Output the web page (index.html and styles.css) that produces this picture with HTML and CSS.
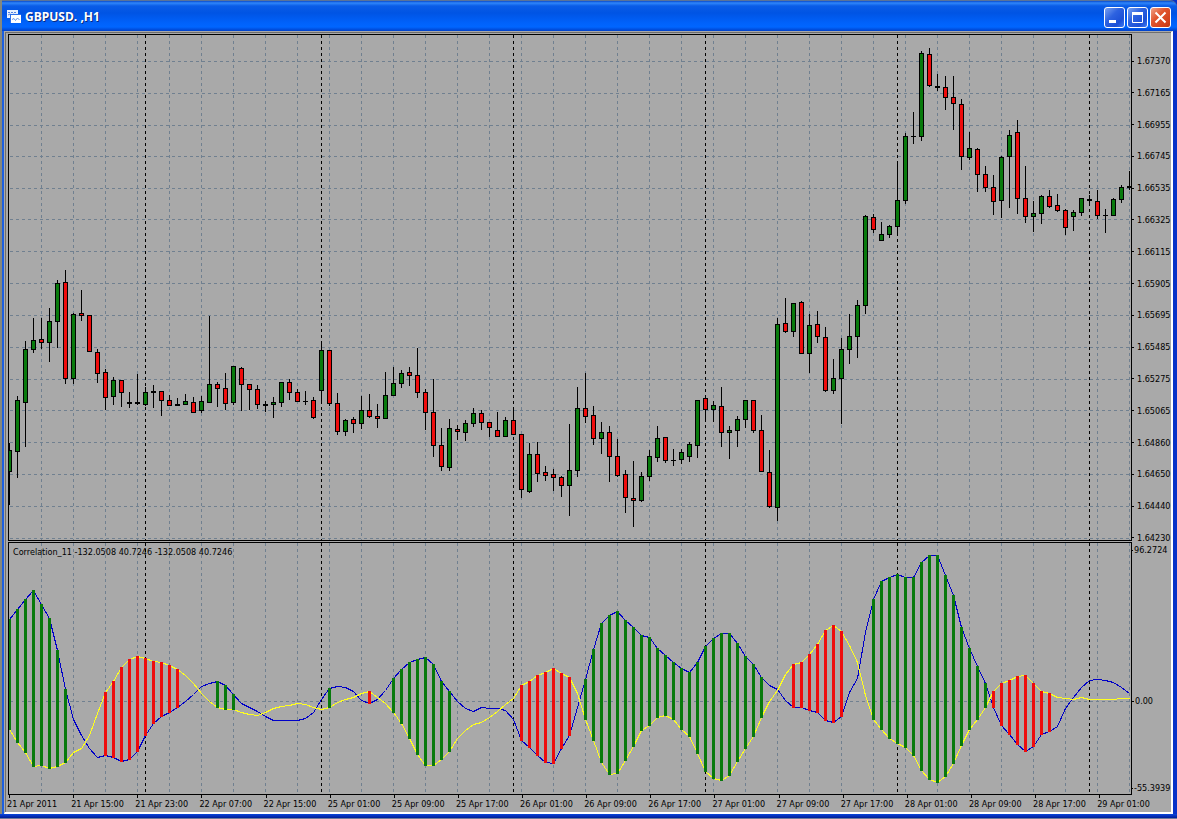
FILE: index.html
```html
<!DOCTYPE html>
<html lang="en">
<head>
<meta charset="utf-8">
<title>GBPUSD. ,H1</title>
<link rel="stylesheet" href="styles.css">
</head>
<body>
<main class="window">
  <header class="titlebar">
    <svg class="app-icon" viewBox="0 0 14 14" aria-hidden="true">
      <rect x="0" y="0" width="11" height="8" fill="#e8f0ff"/>
      <path d="M1 2.500h2M4 2.500h2M7 2.500h2M1 5l2-1 2 1 2-1" stroke="#4f82e4" fill="none"/>
      <rect x="3" y="4" width="11" height="9" fill="#2f6fe8"/>
      <rect x="4" y="5" width="10" height="8" fill="#fff"/>
      <path d="M5 9.500l2-1 1.500 2 2-2.500 2 2" stroke="#6a95e8" fill="none"/>
    </svg>
    <h1 class="title">GBPUSD. ,H1</h1>
    <div class="controls">
      <button class="control" type="button" aria-label="Minimize"><svg viewBox="0 0 19 19"><path d="M4 13.500h7" stroke="#fff" stroke-width="3"/></svg></button>
      <button class="control" type="button" aria-label="Maximize"><svg viewBox="0 0 19 19"><path d="M4.500 5v9.500h10V5" stroke="#fff" fill="none"/><path d="M4 5.500h11" stroke="#fff" stroke-width="3"/></svg></button>
      <button class="control close" type="button" aria-label="Close"><svg viewBox="0 0 19 19"><path d="M4.500 4.500l10 10M14.500 4.500l-10 10" stroke="#fff" stroke-width="2"/></svg></button>
    </div>
  </header>
  <section class="client">
    <div class="pane"><svg id="price" viewBox="9 35 1122 505" preserveAspectRatio="none" role="img" aria-label="Hourly price candles"></svg></div>
    <ul class="scale price-scale" id="price-scale"></ul>
    <div class="pane">
      <svg id="indicator" viewBox="9 543 1122 251" preserveAspectRatio="none" role="img" aria-label="Correlation indicator"></svg>
      <p class="legend">Correlation_11 -132.0508 40.7246 -132.0508 40.7246</p>
    </div>
    <ul class="scale indicator-scale">
      <li class="high">96.2724</li>
      <li class="zero">0.00</li>
      <li class="low">-55.3939</li>
    </ul>
    <ol class="time-scale" id="time-scale"></ol>
  </section>
</main>
<script src="chart.js"></script>
</body>
</html>
```

FILE: styles.css
```css
* { box-sizing: border-box; }

body {
  margin: 0;
  background: #7a8aa8;
  color: #000;
  font: 9px/10px "DejaVu Sans Condensed", "DejaVu Sans", sans-serif;
}

.window {
  display: flex;
  flex-direction: column;
  min-height: 100vh;
  padding: 0 4px 4px 2px;
  background:
    linear-gradient(#0a46dc, #001c96) bottom / 100% 4px no-repeat,
    linear-gradient(to right, #84887f 2px, #1c5fe0 2px, #1c5fe0 50%, #0831c8 50%);
  border-bottom: 1px solid #6f7c9c;
}

.titlebar {
  display: flex;
  align-items: center;
  height: 31px;
  margin: 0 -4px 0 0;
  padding: 2px 6px 0 5px;
  border-top: 1px solid #5b7397;
  border-radius: 0 7px 0 0;
  background: linear-gradient(#0a4bcc 0, #2f86fa 2px, #0a5ce6 5px, #0054e4 12px, #0062fb 22px, #0066ff 26px, #0040c8 30px);
}

.app-icon { width: 14px; height: 14px; }

.title {
  margin: 0 0 0 4px;
  color: #fff;
  font: bold 12px/16px "Open Sans", "Noto Sans", sans-serif;
  text-shadow: 1px 1px 0 #0a2a7c;
}

.controls { display: flex; gap: 2px; margin-left: auto; }

.control {
  width: 21px;
  height: 21px;
  padding: 0;
  border: 1px solid #fff;
  border-radius: 3px;
  background: linear-gradient(135deg, #7aa2f0, #2d62e0 40%, #1c50d6 75%, #3f7cf2);
}

.control svg { display: block; width: 19px; height: 19px; }

.close { background: linear-gradient(135deg, #f0a288, #e0552e 40%, #d2401c 80%, #b83812); }

.client {
  flex: 1;
  display: grid;
  grid-template-columns: minmax(0, 1fr) 39px;
  grid-template-rows: minmax(0, 507fr) minmax(0, 253fr) 16px;
  row-gap: 1px;
  margin-left: 2px;
  padding: 2px 0 0 3px;
  border: solid #a9a9a9;
  border-width: 1px 2px 2px 1px;
  border-right-color: #fff;
  border-bottom-color: #fff;
  background: #a9a9a9;
  box-shadow: inset 1px 1px 0 #6e6e6e;
}

.pane { position: relative; border: 1px solid #000; }

.pane svg { position: absolute; inset: 0; width: 100%; height: 100%; shape-rendering: crispEdges; }

.legend { position: absolute; top: 4px; left: 4px; margin: 0; white-space: nowrap; }

.scale, .time-scale { margin: 0; padding: 0; list-style: none; white-space: nowrap; }

.scale li { display: flex; align-items: center; gap: 3px; }

.scale li::before { content: ""; width: 2px; height: 1px; background: #000; }

.price-scale {
  display: flex;
  flex-direction: column;
  justify-content: space-between;
  margin-bottom: -2px;
  padding-top: 22px;
}

.indicator-scale {
  display: grid;
  grid-template-rows: 10px 141fr 10px 77fr 10px;
  padding: 3px 0 2px;
}

.indicator-scale .high { grid-row: 1; }
.indicator-scale .zero { grid-row: 3; }
.indicator-scale .low { grid-row: 5; }
.indicator-scale li { gap: 1px; }
.indicator-scale .high::before, .indicator-scale .low::before { width: 1px; }

.time-scale { display: flex; margin-left: -1px; }
.time-scale li { flex: 0 0 5.7%; }
.time-scale li::before { content: ""; display: block; width: 1px; height: 3px; margin: -1px 0 1px 2px; background: #000; }

.grid { stroke: #708090; stroke-dasharray: 3 3; }
.day { stroke: #000; stroke-dasharray: 3 3; }
.wick, .doji { stroke: #000; }
.up { fill: #087a0c; }
.down { fill: #ee0c0c; }
.body { stroke: #000; }
.fast { fill: none; stroke: #0000c8; }
.slow { fill: none; stroke: #ffff20; }
```

FILE: chart.js
```js
// Candles: high, body top, body bottom, low, direction (u = up, d = down, n = unchanged).
const candles = `443 450 472 505 u|396 400 452 478 u|341 349 403 447 u|318 340 350 353 u|318 339 343 349 d|308 321 343 362 u|280 283 322 348 u|270 282 379 384 d|313 314 379 384 u|290 313 316 321 d
315 315 352 352 d|349 352 374 383 d|369 372 398 410 d|377 380 397 405 u|380 380 393 407 d|392 402 404 408 n|374 402 404 405 n|387 392 405 406 u|385 391 393 408 n|391 391 401 416 d
395 400 406 406 d|398 404 406 406 n|394 401 405 405 u|397 402 413 413 d|396 401 411 413 u|316 384 403 403 u|382 384 389 407 d|373 388 404 410 d|366 366 403 405 u|367 368 385 411 d
384 384 390 410 d|385 389 405 409 d|401 404 406 412 n|397 402 405 418 u|382 382 403 407 u|379 382 393 400 d|389 392 402 402 d|391 401 402 405 n|397 400 418 419 d|342 350 391 403 u
350 350 404 406 d|393 403 432 435 d|419 420 432 436 u|417 419 424 433 d|396 410 424 429 u|394 410 417 418 d|404 416 419 428 d|372 395 419 419 u|367 383 396 396 u|370 373 384 388 u
367 372 376 386 d|348 375 393 398 d|389 392 413 430 d|379 412 446 457 d|428 445 467 471 d|419 428 468 471 u|425 429 432 440 d|420 423 433 441 u|408 413 424 427 u|410 413 423 430 d
422 422 428 437 d|412 430 437 437 d|417 420 437 437 u|408 420 435 435 d|434 434 490 498 d|443 454 492 493 u|442 454 474 482 d|466 472 476 481 d|469 474 478 491 d|476 477 486 497 d
424 470 486 516 u|387 408 471 477 u|373 408 417 423 d|406 415 439 445 d|422 432 439 454 u|426 432 457 482 d|439 456 476 477 d|470 474 498 513 d|461 498 501 527 d|472 476 501 502 u
450 456 477 481 u|426 438 458 462 u|437 437 461 463 d|449 460 461 466 n|449 452 460 464 u|442 444 457 462 u|400 400 446 458 u|396 398 410 421 d|401 405 410 422 u|387 406 433 447 d
426 430 433 459 u|416 419 431 447 u|400 400 420 428 u|400 400 431 433 d|415 430 472 472 d|450 472 507 508 d|318 324 508 521 u|298 323 332 333 d|303 303 332 337 u|301 302 354 354 d
314 325 354 373 u|311 324 337 343 d|327 337 391 392 d|359 378 391 394 u|338 349 379 424 u|314 336 350 364 u|300 305 337 358 u|215 216 306 314 u|214 217 230 233 d|222 234 241 241 u
225 226 235 238 u|164 200 227 235 u|133 136 201 204 u|112 136 137 144 n|51 53 137 141 u|48 54 86 87 d|74 86 88 91 n|76 87 98 110 d|76 97 104 130 d|99 104 157 170 d
132 148 158 160 u|148 149 175 192 d|166 174 188 192 d|175 187 202 215 d|156 157 201 218 u|130 135 157 208 u|120 132 199 214 d|166 198 217 223 d|201 213 217 232 u|195 196 214 224 u
190 196 207 208 d|194 205 211 212 d|209 210 228 235 d|210 212 217 231 u|198 198 213 216 u|195 199 201 203 n|190 201 216 219 d|209 215 216 233 n|198 199 216 216 u|185 187 200 203 u
171 186 188 190 n`.split(/[|\n]/).map(row => row.split(" "));

const fast = `619 609 599 590 604 618 650 689 719 735 748 757 755 757 761 759 751 735 723 716 712 707 701 694 686 683 681 685 694 703
707 711 716 720 720 720 720 718 712 699 688 686 687 691 700 703 699 690 678 669 662 659 657 664 681 691 701 708 711 707
708 708 710 719 740 747 755 762 763 748 735 707 679 649 623 615 611 620 627 635 637 648 655 662 668 672 662 646 638 633
633 643 656 664 677 685 689 700 707 707 710 712 720 722 716 692 678 632 599 581 577 574 577 577 562 555 555 575 595 627
648 666 683 707 725 734 744 751 746 734 731 726 708 697 687 680 679 680 682 687 693`.split(/\s/).map(Number);

const slow = `729 742 752 766 765 768 766 762 752 748 735 713 692 681 667 659 656 658 661 662 665 669 675 683 693 701 707 709 709 712
714 715 712 708 706 705 703 704 707 709 707 702 699 697 693 691 697 703 712 723 738 754 765 765 759 751 738 730 724 722
717 711 704 698 685 681 675 672 668 673 677 693 719 740 762 774 773 760 746 730 725 717 715 719 729 736 753 771 778 780
775 761 748 736 717 701 690 674 664 662 654 644 630 625 631 645 662 695 719 729 738 743 747 755 770 779 782 776 763 745
729 719 707 691 683 680 676 675 683 691 693 697 698 699 697 699 699 699 699 698 698`.split(/\s/).map(Number);

// Index ranges in which the histogram is filled.
const upRanges = [[0, 7], [26, 28], [40, 40], [48, 55], [72, 94], [108, 122]];
const downRanges = [[12, 21], [45, 45], [64, 70], [98, 104], [123, 130]];

const prices = ["1.67370", "1.67165", "1.66955", "1.66745", "1.66535", "1.66325", "1.66115", "1.65905", "1.65695", "1.65485", "1.65275", "1.65065", "1.64860", "1.64650", "1.64440", "1.64230"];
const priceRows = [61, 93, 125, 156, 188, 219, 251, 283, 315, 347, 379, 410, 442, 474, 506, 538];
const times = ["21 Apr 2011", "21 Apr 15:00", "21 Apr 23:00", "22 Apr 07:00", "22 Apr 15:00", "25 Apr 01:00", "25 Apr 09:00", "25 Apr 17:00", "26 Apr 01:00", "26 Apr 09:00", "26 Apr 17:00", "27 Apr 01:00", "27 Apr 09:00", "27 Apr 17:00", "28 Apr 01:00", "28 Apr 09:00", "28 Apr 17:00", "29 Apr 01:00"];
const days = [17, 39, 63, 87, 111, 135];

const x = i => 9 + 8 * i;
const line = (cls, x1, y1, x2, y2) => `<path class="${cls}" d="M${x1} ${y1}L${x2} ${y2}"/>`;

function gridLines(rows, top, bottom) {
  let out = "";
  for (let i = 4; i <= 140; i += 4) out += line("grid", x(i) + 0.5, top, x(i) + 0.5, bottom);
  for (const y of rows) out += line("grid", 10, y + 0.5, 1131, y + 0.5);
  for (const i of days) out += line("day", x(i) + 0.5, top, x(i) + 0.5, bottom);
  return out;
}

function candle([high, top, bottom, low, kind], i) {
  const wick = line("wick", x(i) + 0.5, high, x(i) + 0.5, low);
  if (kind === "n") return wick + `<rect x="${x(i) - 2}" y="${top}" width="5" height="${bottom - top}"/>`;
  return wick + `<rect class="body ${kind === "u" ? "up" : "down"}" x="${x(i) - 1.5}" y="${+top + 0.5}" width="4" height="${bottom - top - 1}"/>`;
}

function bars(ranges, cls) {
  let out = "";
  for (const [from, to] of ranges)
    for (let i = from; i <= to; i++) {
      const top = Math.min(fast[i], slow[i]);
      out += `<rect class="${cls}" x="${x(i) - 1}" y="${top}" width="3" height="${Math.abs(fast[i] - slow[i]) + 1}"/>`;
    }
  return out;
}

const curve = (values, cls) => `<polyline class="${cls}" points="${values.map((y, i) => `${x(i) + 0.5},${y + 0.5}`).join(" ")}"/>`;
const items = list => list.map(text => `<li>${text}</li>`).join("");

document.getElementById("price").innerHTML = gridLines(priceRows, 35, 540) + candles.map(candle).join("");
document.getElementById("indicator").innerHTML = gridLines([701], 543, 794) + curve(fast, "fast") + curve(slow, "slow") + bars(upRanges, "up") + bars(downRanges, "down");
document.getElementById("price-scale").innerHTML = items(prices);
document.getElementById("time-scale").innerHTML = items(times);
```
